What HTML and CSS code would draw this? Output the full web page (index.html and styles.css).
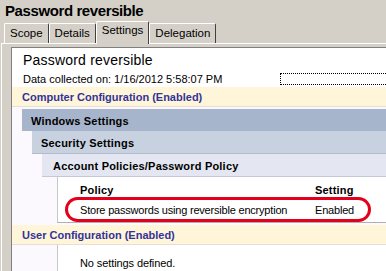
FILE: index.html
```html
<!DOCTYPE html>
<html>
<head>
  <meta charset="UTF-8" />
  <title>Password reversible</title>
  <link rel="stylesheet" href="styles.css">
</head>
<body>
  <div class="title">Password reversible</div>

  <div class="tabs">
    <div class="tab">Scope</div>
    <div class="tab">Details</div>
    <div class="tab active">Settings</div>
    <div class="tab">Delegation</div>
  </div>

  <div class="panel">
    <div class="report">
      <div class="report-head">
        <div class="report-title">Password reversible</div>
        <div class="report-meta">
          <span>Data collected on: 1/16/2012 5:58:07 PM</span>
          <span class="focus-box"></span>
        </div>
      </div>

      <!-- Computer configuration -->
      <div class="config-band">Computer Configuration (Enabled)</div>
      <div class="level level-1">
        <div class="band band-1">Windows Settings</div>
        <div class="level level-2">
          <div class="band band-2">Security Settings</div>
          <div class="level level-3">
            <div class="band band-3">Account Policies/Password Policy</div>
            <div class="policy-table">
              <div class="policy-row policy-head">
                <span class="col-policy">Policy</span>
                <span class="col-setting">Setting</span>
              </div>
              <div class="policy-row">
                <span class="col-policy">Store passwords using reversible encryption</span>
                <span class="col-setting">Enabled</span>
                <div class="highlight"></div>
              </div>
            </div>
          </div>
        </div>
      </div>

      <!-- User configuration -->
      <div class="config-band user-band">User Configuration (Enabled)</div>
      <div class="empty-note">No settings defined.</div>
    </div>
  </div>
</body>
</html>
```

FILE: styles.css
```css
* {
  margin: 0;
  padding: 0;
  box-sizing: border-box;
}

body {
  font-family: 'Liberation Sans', Arial, sans-serif;
  background: #d4d0c8;
  color: #000;
  width: 386px;
  height: 271px;
  overflow: hidden;
}

.title {
  font-weight: bold;
  font-size: 15px;
  letter-spacing: -0.4px;
  height: 21px;
  padding: 2px 0 0 5px;
}

.tabs {
  display: flex;
  align-items: flex-end;
  height: 22px;
  padding-left: 4px;
}

.tab {
  height: 20px;
  padding: 3px 5px 0;
  font-size: 11.5px;
  border-top: 1px solid #fff;
  border-left: 1px solid #fff;
  border-right: 1px solid #404040;
  border-radius: 2px 2px 0 0;
}

.tab.active {
  height: 23px;
  margin-bottom: -1px;
  padding-top: 2px;
  background: #d4d0c8;
  position: relative;
  z-index: 1;
}

.panel {
  border-top: 1px solid #fff;
  border-left: 1px solid #fff;
  margin-left: 1px;
  padding: 3px 0 0 9px;
  height: 228px;
}

.report {
  background: #fbf9fd;
  border-top: 1px solid #808080;
  border-left: 1px solid #808080;
  height: 100%;
}

.report-head {
  background: #fff;
  height: 39px;
  padding: 4px 0 0 11px;
}

.report-title {
  font-size: 14px;
  letter-spacing: 0.2px;
  height: 20px;
}

.report-meta {
  display: flex;
  align-items: center;
  font-size: 11px;
}

.focus-box {
  margin-left: auto;
  margin-top: 1px;
  width: 106px;
  height: 12px;
  border: 1px dotted #000;
  border-right: none;
}

.config-band {
  background: #fff5d9;
  color: #333399;
  font-weight: bold;
  font-size: 11px;
  height: 20px;
  padding: 4px 0 0 10px;
  border-bottom: 1px solid #e4e0d8;
}

.user-band {
  margin-top: 2px;
}

.level-1 {
  margin: 2px 0 0 10px;
}

.level-2,
.level-3 {
  margin-left: 10px;
}

.band {
  font-weight: bold;
  font-size: 11px;
  letter-spacing: 0.2px;
  height: 23px;
  padding: 6px 0 0 9px;
}

.band-1 {
  background: #a6b5cb;
  height: 22px;
}

.band-2 {
  background: #c8d1df;
  border-bottom: 1px solid #b4bccb;
}

.band-3 {
  background: #e4e7f1;
  border-bottom: 1px solid #c4c8d4;
  padding-left: 11px;
}

.policy-table {
  margin-left: 15px;
  background: #fff;
  border-left: 1px solid #c8c8c8;
  border-bottom: 1px solid #b0b0b0;
  height: 46px;
}

.policy-row {
  display: flex;
  position: relative;
  font-size: 11px;
  letter-spacing: -0.2px;
  padding-left: 22px;
  height: 25px;
  padding-top: 7px;
}

.policy-head {
  font-weight: bold;
  letter-spacing: 0.2px;
  height: 20px;
  padding-top: 7px;
}

.col-policy {
  width: 235px;
}

.highlight {
  position: absolute;
  left: 7px;
  top: 0;
  width: 306px;
  height: 25px;
  border: 3px solid #e4001b;
  border-radius: 13px;
}

.empty-note {
  margin-left: 45px;
  background: #fff;
  border-left: 1px solid #c8c8c8;
  height: 30px;
  padding: 12px 0 0 22px;
  font-size: 11px;
  letter-spacing: -0.1px;
}
```
